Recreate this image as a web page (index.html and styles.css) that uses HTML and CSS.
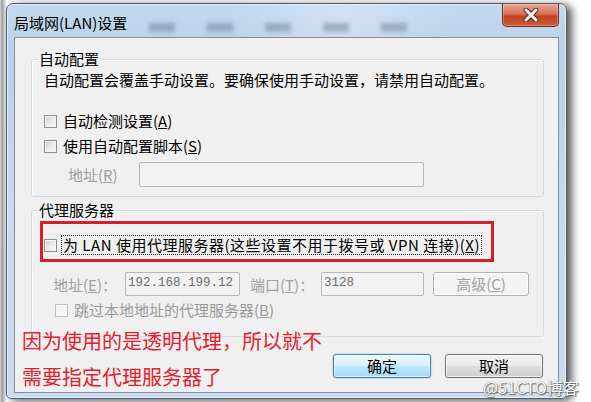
FILE: index.html
```html
<!DOCTYPE html>
<html lang="zh-CN">
  <head>
    <meta charset="UTF-8" />
    <title>局域网(LAN)设置</title>
    <link rel="stylesheet" href="styles.css">
  </head>
  <body>
    <div class="screen">
      <div class="behind"></div>
      <div class="window">
        <div class="titlebar">
          <span class="title">局域网(LAN)设置</span>
          <div class="glass-tabs">
            <i></i><i></i><i></i><i></i><i></i>
          </div>
          <button class="close" type="button">
            <svg width="18" height="14" viewBox="0 0 18 14">
              <path d="M4 2 L14 12 M14 2 L4 12" stroke="#5a2418" stroke-width="5" stroke-linecap="round" />
              <path d="M4 2 L14 12 M14 2 L4 12" stroke="#ffffff" stroke-width="3" stroke-linecap="round" />
            </svg>
          </button>
        </div>

        <div class="client">
          <!-- 自动配置 -->
          <fieldset class="group group-auto">
            <legend>自动配置</legend>
            <p class="desc">自动配置会覆盖手动设置。要确保使用手动设置，请禁用自动配置。</p>
            <div class="check check-detect"><span class="cb"></span>自动检测设置(<u>A</u>)</div>
            <div class="check check-script"><span class="cb"></span>使用自动配置脚本(<u>S</u>)</div>
            <div class="field-row script-row">
              <span class="lbl lbl-script off">地址(<u>R</u>)</span>
              <span class="input input-script"></span>
            </div>
          </fieldset>

          <!-- 代理服务器 -->
          <fieldset class="group group-proxy">
            <legend>代理服务器</legend>
            <div class="check check-proxy">
              <span class="mark"></span>
              <span class="cb"></span>
              <span class="focus">为 LAN 使用代理服务器(这些设置不用于拨号或 VPN 连接)(<u>X</u>)</span>
            </div>
            <div class="field-row proxy-row">
              <span class="lbl lbl-addr off">地址(<u>E</u>)：</span>
              <span class="input input-addr">192.168.199.12</span>
              <span class="lbl lbl-port off">端口(<u>T</u>)：</span>
              <span class="input input-port">3128</span>
              <button class="btn btn-adv" type="button" disabled>高级(<u>C</u>)</button>
            </div>
            <div class="check check-bypass off"><span class="cb"></span>跳过本地地址的代理服务器(<u>B</u>)</div>
          </fieldset>

          <div class="buttons">
            <button class="btn btn-ok" type="button">确定</button>
            <button class="btn btn-cancel" type="button">取消</button>
          </div>

          <p class="note">因为使用的是透明代理，所以就不<br>需要指定代理服务器了</p>
        </div>
      </div>
      <div class="watermark">@51CTO博客</div>
    </div>
  </body>
</html>
```

FILE: styles.css
```css
* {
  box-sizing: border-box;
}

body {
  margin: 0;
  background: #fff;
  font-family: "Noto Sans CJK SC", "Liberation Sans", sans-serif;
  font-size: 15px;
  color: #000;
}

.screen {
  position: relative;
  display: flex;
  width: 591px;
  height: 402px;
  overflow: hidden;
}

.behind {
  width: 6px;
  background: linear-gradient(90deg, #d8d8d8, #9c9c9c 35%, #c8c8c8 65%, #ececec);
}

.window {
  display: flex;
  flex-direction: column;
  width: 561px;
  height: 396px;
  margin-top: 3px;
  border: 1px solid #4f5d70;
  border-radius: 7px 7px 5px 5px;
  background: linear-gradient(180deg, #c4d9ef 0%, #bcd2ea 10%, #c6daf0 60%, #c9dcf0 100%);
  box-shadow: inset 0 0 0 1px rgba(255, 255, 255, 0.55), 5px 2px 9px rgba(0, 0, 0, 0.65);
}

/* 标题栏 */
.titlebar {
  display: flex;
  align-items: flex-start;
  height: 33px;
  padding: 0 7px;
  background: linear-gradient(90deg, rgba(255, 255, 255, 0) 40%, rgba(255, 255, 255, 0.25) 60%, rgba(255, 255, 255, 0) 80%);
}

.title {
  margin-top: 10px;
  line-height: 18px;
  font-size: 15px;
}

.glass-tabs {
  display: flex;
  gap: 32px;
  margin: 19px 0 0 22px;
}

.glass-tabs i {
  display: block;
  width: 26px;
  height: 9px;
  background: rgba(70, 90, 120, 0.35);
  filter: blur(2px);
}

.close {
  display: flex;
  align-items: center;
  justify-content: center;
  width: 57px;
  height: 23px;
  margin-left: auto;
  padding: 0;
  border: 1px solid #6b2a1a;
  border-top: none;
  border-radius: 0 0 5px 5px;
  background: linear-gradient(180deg, #e9a493 0%, #d9745c 45%, #c2411f 55%, #cf5a35 100%);
  box-shadow: inset 0 0 0 1px rgba(255, 255, 255, 0.3);
}

/* 客户区 */
.client {
  position: relative;
  flex: 1;
  margin: 0 7px 5px;
  padding: 12px 14px 0 16px;
  border: 1px solid #7f8fa2;
  background: #f0f0f0;
}

.group {
  margin: 0;
  padding: 0 0 9px 12px;
  border: 1px solid #d5dbe0;
  border-radius: 3px;
  box-shadow: inset 1px 1px 0 #fff;
}

.group legend {
  margin-left: -6px;
  padding: 0 1px;
  line-height: 18px;
}

.desc {
  margin: 3px 0 0;
  line-height: 18px;
}

.check {
  display: flex;
  align-items: center;
  height: 20px;
  line-height: 20px;
}

.check .cb {
  width: 13px;
  height: 13px;
  margin-right: 6px;
  border: 1px solid #8e8f8f;
  background: linear-gradient(135deg, #d2d2d2 0%, #eeeeee 60%, #fafafa 100%);
  box-shadow: inset 0 0 0 1px #f4f4f4;
}

.check.off {
  color: #9a9a9a;
}

.check.off .cb {
  border-color: #c0c0c0;
  background: #f6f6f6;
  box-shadow: none;
}

.check-detect {
  margin-top: 22px;
}

.check-script {
  margin-top: 5px;
}

.field-row {
  display: flex;
  align-items: center;
}

.lbl.off {
  color: #a0a0a0;
}

.input {
  height: 25px;
  border: 1px solid #b5b9bd;
  border-radius: 2px;
  background: #f2f2f2;
  font-family: "Liberation Mono", monospace;
  font-size: 12.5px;
  line-height: 22px;
  color: #6d6d6d;
  padding-left: 2px;
  overflow: hidden;
  white-space: nowrap;
}

.script-row {
  margin-top: 6px;
  padding-left: 24px;
}

.lbl-script {
  width: 71px;
}

.input-script {
  width: 285px;
}

/* 代理服务器 */
.group-proxy {
  margin-top: 4px;
  padding-bottom: 16px;
}

.check-proxy {
  position: relative;
  margin-top: 16px;
}

.check-proxy .cb {
  margin-right: 4px;
}

.check-proxy .focus {
  padding: 0 1px;
  border: 1px dotted #222;
  line-height: 18px;
  letter-spacing: 0.5px;
  white-space: nowrap;
}

.check-proxy .mark {
  position: absolute;
  left: -4px;
  top: -14px;
  width: 454px;
  height: 41px;
  border: 3px solid #d4202c;
}

.proxy-row {
  margin-top: 17px;
  padding-left: 9px;
}

.proxy-row .input {
  height: 24px;
  line-height: 21px;
}

.lbl-addr {
  width: 72px;
}

.input-addr {
  width: 115px;
}

.lbl-port {
  width: 71px;
  margin-left: 10px;
}

.input-port {
  width: 103px;
}

.check-bypass {
  margin-top: 4px;
  padding-left: 11px;
}

/* 按钮 */
.btn {
  height: 24px;
  padding: 0;
  border: 1px solid #707070;
  border-radius: 3px;
  font-family: inherit;
  font-size: 15px;
  line-height: 20px;
  color: #000;
  background: linear-gradient(180deg, #f2f2f2 0%, #ebebeb 50%, #dddddd 51%, #cfcfcf 100%);
  box-shadow: inset 0 0 0 1px rgba(255, 255, 255, 0.7);
}

.btn-adv {
  width: 96px;
  margin-left: 9px;
  border-color: #adb2b5;
  background: #f4f4f4;
  color: #a0a0a0;
}

.buttons {
  display: flex;
  justify-content: flex-end;
  gap: 14px;
  margin-top: 17px;
  padding-right: 1px;
}

.btn-ok,
.btn-cancel {
  width: 98px;
}

.btn-ok {
  border-color: #3c7fb1;
  background: linear-gradient(180deg, #eaf6fd 0%, #d9f0fc 50%, #bee6fd 51%, #a7d9f5 100%);
  box-shadow: inset 0 0 0 1px rgba(255, 255, 255, 0.6), 0 0 2px rgba(60, 127, 177, 0.5);
}

.note {
  position: absolute;
  left: 7px;
  top: 285px;
  margin: 0;
  font-size: 20px;
  line-height: 36px;
  color: #e3202c;
}

.watermark {
  position: absolute;
  left: 483px;
  top: 379px;
  font-size: 16px;
  line-height: 16px;
  color: #fff;
  text-shadow: 0 0 1px #555, 1px 1px 1px #666;
}
```
